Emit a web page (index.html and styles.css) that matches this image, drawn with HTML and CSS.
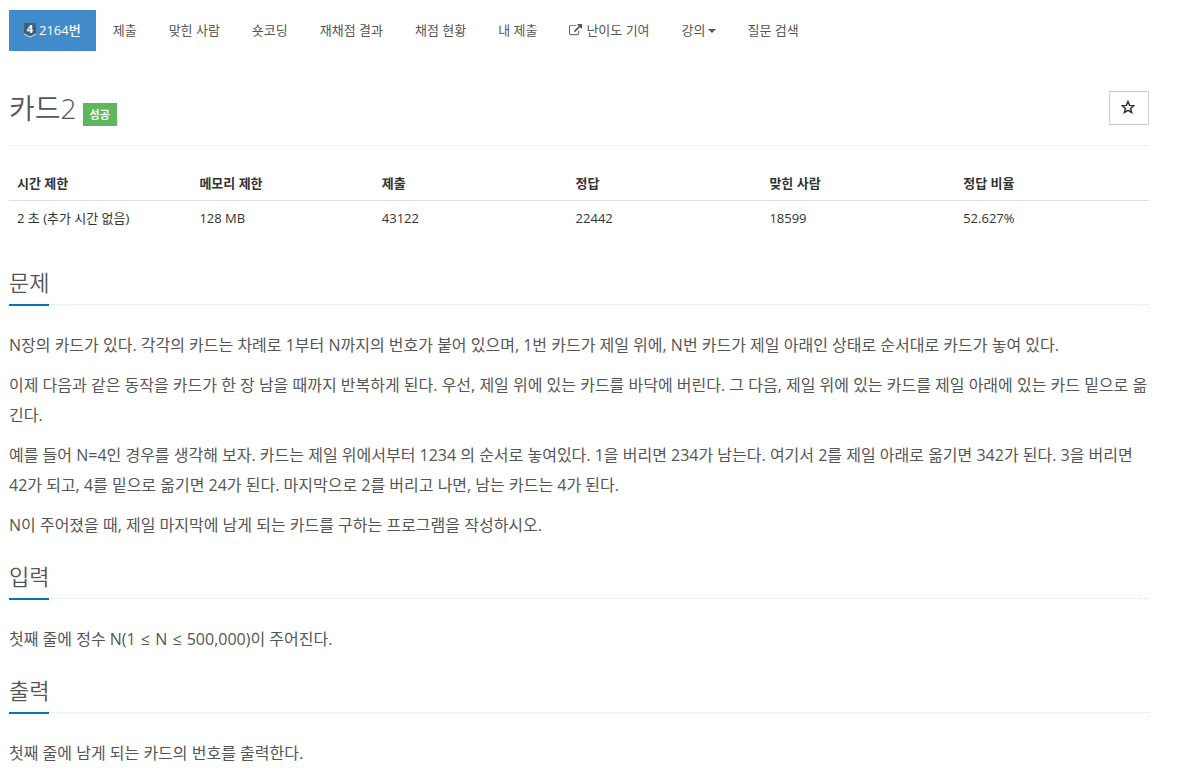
FILE: index.html
```
<!DOCTYPE html>
<html lang="ko">
<head>
  <meta charset="UTF-8">
  <meta name="viewport" content="width=device-width, initial-scale=1">
  <title>2164번: 카드2</title>
  <link rel="stylesheet" href="styles.css">
</head>
<body>
  <div class="container">
    <nav>
      <ul class="problem-menu">
        <li class="active"><a href="#">
          <svg class="tier" viewBox="0 0 12 15" aria-hidden="true">
            <path fill="#435f7a" d="M0 0h12v11l-6 3-6-3z"/>
            <path fill="none" stroke="#e3eaf2" d="M0 11l6 3 6-3"/>
            <text x="6" y="10" text-anchor="middle">4</text>
          </svg>
          2164번</a></li>
        <li><a href="#">제출</a></li>
        <li><a href="#">맞힌 사람</a></li>
        <li><a href="#">숏코딩</a></li>
        <li><a href="#">재채점 결과</a></li>
        <li><a href="#">채점 현황</a></li>
        <li><a href="#">내 제출</a></li>
        <li><a href="#">
          <svg class="external" viewBox="0 0 1792 1792" aria-hidden="true"><path d="M1408 928v320q0 119-84.500 203.500t-203.500 84.500h-832q-119 0-203.500-84.500t-84.500-203.500v-832q0-119 84.500-203.500t203.500-84.500h704q14 0 23 9t9 23v64q0 14-9 23t-23 9h-704q-66 0-113 47t-47 113v832q0 66 47 113t113 47h832q66 0 113-47t47-113v-320q0-14 9-23t23-9h64q14 0 23 9t9 23zm384-864v512q0 26-19 45t-45 19-45-19l-176-176-652 652q-10 10-23 10t-23-10l-114-114q-10-10-10-23t10-23l652-652-176-176q-19-19-19-45t19-45 45-19h512q26 0 45 19t19 45z"/></svg>
          난이도 기여</a></li>
        <li><a href="#">강의<span class="caret"></span></a></li>
        <li><a href="#">질문 검색</a></li>
      </ul>
    </nav>

    <header class="page-header">
      <h1>카드2</h1>
      <span class="label">성공</span>
      <button class="favorite" type="button" aria-label="즐겨찾기">
        <svg viewBox="0 0 14 14" aria-hidden="true"><path d="M7 1.500l1.600 3.900 4.100.3-3.100 2.700 1 4.100L7 10.300l-3.600 2.200 1-4.100-3.100-2.700 4.100-.3z"/></svg>
      </button>
    </header>

    <table class="problem-info">
      <thead>
        <tr>
          <th class="narrow">시간 제한</th>
          <th class="narrow">메모리 제한</th>
          <th>제출</th>
          <th>정답</th>
          <th>맞힌 사람</th>
          <th>정답 비율</th>
        </tr>
      </thead>
      <tbody>
        <tr>
          <td>2 초 (추가 시간 없음)</td>
          <td>128 MB</td>
          <td>43122</td>
          <td>22442</td>
          <td>18599</td>
          <td>52.627%</td>
        </tr>
      </tbody>
    </table>

    <section>
      <div class="headline"><h2>문제</h2></div>
      <p>N장의 카드가 있다. 각각의 카드는 차례로 1부터 N까지의 번호가 붙어 있으며, 1번 카드가 제일 위에, N번 카드가 제일 아래인 상태로 순서대로 카드가 놓여 있다.</p>
      <p>이제 다음과 같은 동작을 카드가 한 장 남을 때까지 반복하게 된다. 우선, 제일 위에 있는 카드를 바닥에 버린다. 그 다음, 제일 위에 있는 카드를 제일 아래에 있는 카드 밑으로 옮긴다.</p>
      <p>예를 들어 N=4인 경우를 생각해 보자. 카드는 제일 위에서부터 1234 의 순서로 놓여있다. 1을 버리면 234가 남는다. 여기서 2를 제일 아래로 옮기면 342가 된다. 3을 버리면 42가 되고, 4를 밑으로 옮기면 24가 된다. 마지막으로 2를 버리고 나면, 남는 카드는 4가 된다.</p>
      <p>N이 주어졌을 때, 제일 마지막에 남게 되는 카드를 구하는 프로그램을 작성하시오.</p>
    </section>

    <section>
      <div class="headline"><h2>입력</h2></div>
      <p>첫째 줄에 정수 N(1 <span class="math">≤</span> N <span class="math">≤</span> 500,000)이 주어진다.</p>
    </section>

    <section>
      <div class="headline"><h2>출력</h2></div>
      <p>첫째 줄에 남게 되는 카드의 번호를 출력한다.</p>
    </section>
  </div>
</body>
</html>
```
FILE: styles.css
```
* {
  box-sizing: border-box;
}

body {
  margin: 0;
  padding: 10px 38px 0 9px;
  background: #fff;
  color: #333;
  font-family: "Open Sans", "Noto Sans CJK KR", sans-serif;
  font-size: 13px;
  line-height: 21px;
}

.container {
  max-width: 1140px;
}

.problem-menu {
  display: flex;
  flex-wrap: wrap;
  gap: 2px;
  margin: 0;
  padding: 0;
  list-style: none;
}

.problem-menu a {
  display: flex;
  align-items: center;
  padding: 10px 15px;
  color: #555;
  text-decoration: none;
}

.problem-menu .active a {
  background: #428bca;
  color: #fff;
  font-weight: 500;
}

.tier {
  width: 12px;
  height: 15px;
  margin-right: 3px;
  overflow: visible;
}

.tier text {
  fill: #fff;
  font-size: 11px;
  font-weight: 700;
}

.external {
  width: 13px;
  height: 13px;
  margin-right: 4px;
  fill: #555;
}

.caret {
  margin-left: 2px;
  border-top: 4px solid #555;
  border-right: 4px solid transparent;
  border-left: 4px solid transparent;
}

.page-header {
  display: flex;
  align-items: flex-end;
  gap: 6px;
  margin: 40px 0 20px;
  padding-bottom: 19px;
  border-bottom: 1px solid #eee;
}

h1 {
  margin: 0;
  color: #555;
  font-size: 28px;
  font-weight: 350;
  line-height: 35px;
}

.label {
  padding: 1px 7px;
  background: #5cb85c;
  color: #fff;
  font-size: 11px;
  font-weight: 700;
}

.favorite {
  display: flex;
  align-items: center;
  justify-content: center;
  align-self: flex-start;
  width: 40px;
  height: 34px;
  margin-left: auto;
  padding: 0 2px 2px 0;
  border: 1px solid #ccc;
  background: #fff;
  cursor: pointer;
}

.favorite svg {
  width: 14px;
  height: 14px;
  fill: none;
  stroke: #333;
  stroke-width: 1.5;
}

.problem-info {
  width: 100%;
  border-collapse: collapse;
  table-layout: fixed;
  line-height: 18px;
}

.problem-info th,
.problem-info td {
  padding: 8px;
  text-align: left;
}

.problem-info th {
  width: 17%;
  border-bottom: 1px solid #ddd;
}

.problem-info .narrow {
  width: 16%;
}

.headline {
  margin: 20px 0 25px;
  border-bottom: 1px dotted #dde2ea;
}

h2 {
  display: inline-block;
  margin: 0 0 -2px;
  padding-bottom: 5px;
  border-bottom: 2px solid #0076bd;
  color: #555;
  font-size: 22px;
  font-weight: 350;
  line-height: 33px;
  vertical-align: top;
}

.problem-info + section .headline {
  margin-top: 31px;
}

p {
  margin: 0 0 10px;
  color: #555;
  font-size: 16px;
  line-height: 30px;
}

.math {
  margin: 0 1px;
}
```
